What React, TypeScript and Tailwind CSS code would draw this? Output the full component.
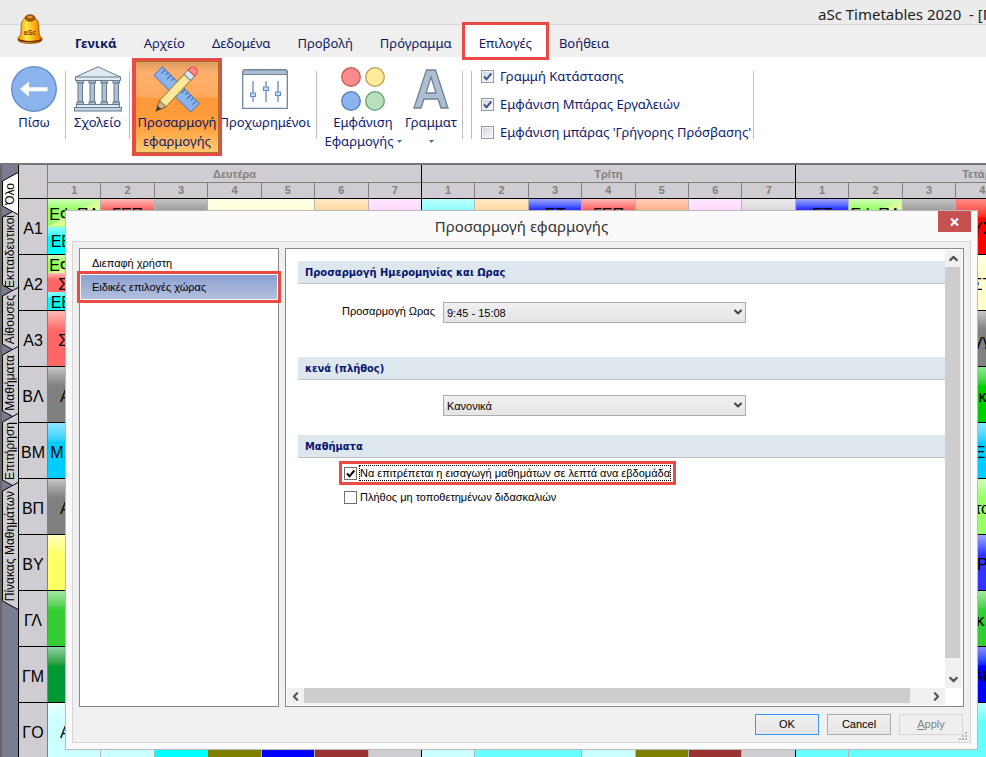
import React from 'react';
import { ChevronDown, ChevronLeft, ChevronRight, ChevronUp } from 'lucide-react';

type Cell = {
  color: string;
  text?: string;
  span?: number;
  parts?: { color: string; text?: string; accent?: string }[];
};

type Row = { label: string; cells: Cell[] };

const menuItems = ['Γενικά', 'Αρχείο', 'Δεδομένα', 'Προβολή', 'Πρόγραμμα', 'Επιλογές', 'Βοήθεια'];

const toolbarOptions = [
  { label: 'Γραμμή Κατάστασης', checked: true },
  { label: 'Εμφάνιση Μπάρας Εργαλειών', checked: true },
  { label: "Εμφάνιση μπάρας 'Γρήγορης Πρόσβασης'", checked: false },
];

const sideTabs = [
  { label: 'Όλο', height: 43 },
  { label: 'Εκπαιδευτικοί', height: 86 },
  { label: 'Αίθουσες', height: 66 },
  { label: 'Μαθήματα', height: 74 },
  { label: 'Επιτήρηση', height: 76 },
  { label: 'Πίνακας Μαθημάτων', height: 128 },
];

const days = ['Δευτέρα', 'Τρίτη', 'Τετάρτη'];
const periods = [1, 2, 3, 4, 5, 6, 7];

const lime = { color: '#99ff66', text: 'ΕΦ ΠΛ', accent: '#d9ff99' };
const aqua = { color: '#00ffff', text: 'ΕΕ ΕΕ' };
const empty = { color: '#00ffff' };
const rose = { color: '#ff6666', text: 'ΓΕΠ' };
const navy = { color: '#3333ff', text: 'ΕΤ' };
const filler: Cell = { color: '#cfcdd2', span: 16 };

const rows: Row[] = [
  {
    label: 'Α1',
    cells: [
      { color: '', parts: [lime, aqua] },
      { color: '', parts: [rose, empty] },
      { color: '#808080' },
      { color: '#ffffcc', span: 2 },
      { color: '#ffcc80' },
      { color: '#ffccff' },
      { color: '#66ffff' },
      { color: '#ffcc80' },
      { color: '', parts: [navy, empty] },
      { color: '', parts: [rose, empty] },
      { color: '#ff9966' },
      { color: '#ffccff' },
      { color: '#cfcdd2' },
      { color: '', parts: [navy, empty] },
      { color: '', parts: [lime, empty] },
      { color: '#808080' },
      { color: '#ff0000', text: 'ΥΣ' },
    ],
  },
  {
    label: 'Α2',
    cells: [
      { color: '', parts: [lime, { color: '#ff6666', text: 'ΣΕΠ' }, aqua] },
      filler,
      { color: '#ffffcc', text: 'ΣΤ' },
    ],
  },
  { label: 'Α3', cells: [{ color: '#ff6666', text: 'ΣΕΠ' }, filler, { color: '#808080', text: 'γγ' }] },
  { label: 'ΒΛ', cells: [{ color: '#808080', text: 'ΑΓΓ' }, filler, { color: '#00cc00', text: 'κ' }] },
  { label: 'ΒΜ', cells: [{ color: '#00ccff', text: 'Μ. ΕΕ.' }, filler, { color: '#00ccff', text: 'Ε.' }] },
  { label: 'ΒΠ', cells: [{ color: '#808080', text: 'ΑΓΓ' }, filler, { color: '#99ff66', text: 'το' }] },
  { label: 'ΒΥ', cells: [{ color: '#ffff66' }, filler, { color: '#3333ff', text: 'Ρ' }] },
  { label: 'ΓΛ', cells: [{ color: '#33cc33' }, filler, { color: '#33cc33', text: 'κ.' }] },
  { label: 'ΓΜ', cells: [{ color: '#009933' }, filler, { color: '#0000ff', text: 'Αθ' }] },
  {
    label: 'ΓΟ',
    cells: [
      { color: '#ccffff', text: 'ΑΓΓ' },
      { color: '#ccffff' },
      { color: '#00ffff' },
      { color: '#808000' },
      { color: '#0000ff' },
      { color: '#993333' },
      { color: '#cfcdd2' },
      { color: '#ccffff' },
      { color: '#66ffff', span: 2 },
      { color: '#ccffff' },
      { color: '#808000' },
      { color: '#993333' },
      { color: '#cfcdd2' },
      { color: '#66ffff' },
      { color: '#66ffff', span: 3 },
    ],
  },
];

const shade = (color: string) =>
  `linear-gradient(to bottom, color-mix(in srgb, ${color} 45%, white), ${color} 35%)`;

const BellIcon: React.FC = () => (
  <svg viewBox="0 0 26 30" className="h-[30px] w-[26px]">
    <defs>
      <linearGradient id="bell" x1="0" x2="1" y1="0" y2="0">
        <stop offset="0" stopColor="#f08a00" />
        <stop offset="0.35" stopColor="#ffe94a" />
        <stop offset="0.65" stopColor="#fdb515" />
        <stop offset="1" stopColor="#d96500" />
      </linearGradient>
    </defs>
    <path
      d="M13 3C7 3 4.500 6 4.200 12L3.800 20C3.500 22 1 23 .8 25C1 28.500 7 29.500 13 29.500S25 28.500 25.200 25C25 23 22.500 22 22.200 20L21.800 12C21.500 6 19 3 13 3Z"
      fill="url(#bell)"
      stroke="#9a5200"
      strokeWidth="0.8"
    />
    <path d="M1.500 25.500C6 28.500 20 28.500 24.500 25.500" fill="none" stroke="#7b2a00" strokeWidth="1.600" />
    <ellipse cx="13" cy="4" rx="5" ry="3.200" fill="#a85a06" stroke="#6d3500" strokeWidth="0.8" />
    <ellipse cx="13" cy="3" rx="2.500" ry="1.300" fill="#e39a2c" />
    <text x="13" y="21" fontSize="7" fontWeight="700" textAnchor="middle" fill="#8a3a10" fontFamily="Liberation Sans, sans-serif">
      aSc
    </text>
  </svg>
);

const BackIcon: React.FC = () => (
  <svg viewBox="0 0 46 46" className="mb-px h-[46px] w-[46px]">
    <circle cx="23" cy="23" r="22.300" fill="#8bb4ee" stroke="#6089c8" strokeWidth="1.300" />
    <path d="M9 23L18 15.500V21.200H36.500V25.200H18V30.700Z" fill="#fff" />
  </svg>
);

const SchoolIcon: React.FC = () => (
  <svg viewBox="0 0 48 46" className="mb-px h-[46px] w-12" stroke="#667b8f" strokeWidth="1">
    <path d="M1.500 11L24 .8L46.500 11V14.500H1.500Z" fill="#dfeaf3" />
    <path d="M1.500 11H46.500" fill="none" />
    {[3, 15, 27, 39].map((x) => (
      <g key={x} fill="#aebfd1">
        <rect x={x} y="14.500" width="6.500" height="2.500" />
        <rect x={x + 1} y="17" width="4.500" height="19" />
        <rect x={x} y="36" width="6.500" height="3" />
      </g>
    ))}
    <rect x="2.500" y="38.500" width="43" height="3" fill="#dfeaf3" />
    <rect x=".5" y="41.500" width="47" height="3.500" fill="#c4d3e0" />
  </svg>
);

const CustomizeIcon: React.FC = () => (
  <svg viewBox="0 0 46 46" className="mb-px h-[46px] w-[46px]">
    <g transform="rotate(45 23 23)">
      <rect x="-3" y="17.500" width="52" height="12" fill="#8bb4ee" stroke="#5a83c2" />
      {[1, 5, 9, 13, 29, 33, 37, 41, 45].map((x, i) => (
        <path key={x} d={`M${x} 17.500V${i % 2 ? 21 : 23}`} stroke="#47699f" strokeWidth="1.100" />
      ))}
    </g>
    <g transform="translate(2 45) rotate(-47)">
      <path d="M0 0L10 -4.500V4.500Z" fill="#d9b384" stroke="#6f5b39" />
      <path d="M0 0L5 -2.300V2.300Z" fill="#3b3b3b" />
      <rect x="10" y="-4.500" width="36" height="9" fill="#fbe89b" stroke="#9b8541" />
      <rect x="46" y="-4.500" width="6" height="9" fill="#d9e8f4" stroke="#6f8799" />
      <path d="M52 -4.500H54A4.500 4.500 0 0 1 54 4.500H52Z" fill="#ff8787" stroke="#c84e4e" />
    </g>
  </svg>
);

const SlidersIcon: React.FC = () => (
  <svg viewBox="0 0 46 40" className="mt-[3px] mb-1 h-10 w-[46px]">
    <path d="M.7 39.300V3Q.7 .7 3 .7H43Q45.300 .7 45.300 3V39.300Z" fill="#fff" stroke="#71869a" strokeWidth="1.300" />
    <path d="M1 5.500V3Q1 1 3 1H43Q45 1 45 3V5.500Z" fill="#adbdd1" stroke="#71869a" />
    {[
      [11, 24],
      [24, 18],
      [36, 23],
    ].map(([x, y]) => (
      <g key={x}>
        <path d={`M${x} 12V33`} stroke="#6089c8" strokeWidth="1.300" />
        <rect x={x - 2.5} y={y} width="5" height="3.500" fill="#c3dcf7" stroke="#6089c8" />
      </g>
    ))}
  </svg>
);

const ColorsIcon: React.FC = () => (
  <svg viewBox="0 0 46 46" className="mb-px h-[46px] w-[46px]" strokeWidth="1.300">
    <circle cx="11" cy="11" r="9.300" fill="#fa8b8b" stroke="#ca5555" />
    <circle cx="35" cy="11" r="9.300" fill="#ffeb9c" stroke="#b9a052" />
    <circle cx="11" cy="35" r="9.300" fill="#8bb4ee" stroke="#527fbd" />
    <circle cx="35" cy="35" r="9.300" fill="#b9e0bb" stroke="#62a575" />
  </svg>
);

const LetterIcon: React.FC = () => (
  <svg viewBox="0 0 36 46" className="mb-px h-[46px] w-9">
    <path
      d="M13.500 4H22.500L35 42H28L25 33H11L8 42H1ZM18 11L13 27H23Z"
      fill="#adbed2"
      fillRule="evenodd"
      stroke="#6f8294"
      strokeWidth="1.300"
    />
  </svg>
);

const Separator: React.FC = () => <span className="mt-[10px] h-[68px] w-px shrink-0 bg-[#bcbcbc]" />;

const Caret: React.FC = () => (
  <svg viewBox="0 0 5 3" className="h-[3px] w-[5px]">
    <path d="M0 0H5L2.500 3Z" fill="#4472b0" />
  </svg>
);

const CheckBox: React.FC<{ id: string; checked: boolean; ribbon?: boolean }> = ({ id, checked, ribbon }) => (
  <span className="relative block size-[13px] shrink-0">
    <input
      id={id}
      type="checkbox"
      defaultChecked={checked}
      className={`peer block size-[13px] appearance-none border ${
        ribbon
          ? 'border-[#8d9cad] bg-linear-to-br from-[#c9d2de] to-white shadow-[inset_0_0_0_1px_#f4f4f4]'
          : 'border-[#707070] bg-white'
      }`}
    />
    <svg viewBox="0 0 13 13" className="pointer-events-none absolute inset-0 hidden size-[13px] peer-checked:block">
      <path d="M3 6.500L5.500 9.300L10.300 3.500" fill="none" stroke={ribbon ? '#3c588f' : '#000'} strokeWidth="2" />
    </svg>
  </span>
);

const MenuBar: React.FC = () => (
  <nav className="flex h-8 bg-[#efefef] pl-[62px] text-[#0b1a63]">
    {menuItems.map((item, i) => (
      <button
        key={item}
        className={`-ml-px px-[14px] pt-1 ${i === 0 ? 'font-bold' : ''} ${
          item === 'Επιλογές' ? 'relative z-10 bg-white outline-3 outline-[#e94b43]' : ''
        }`}
      >
        {item}
      </button>
    ))}
  </nav>
);

const Ribbon: React.FC = () => (
  <div className="flex h-[106px] bg-white pt-1 text-[#0b1a6e]">
    <button className="flex w-[65px] flex-col items-center pt-[5px] pl-[3px]">
      <BackIcon />
      <span>Πίσω</span>
    </button>
    <Separator />
    <button className="flex w-[63px] flex-col items-center pt-[5px]">
      <SchoolIcon />
      <span>Σχολείο</span>
    </button>
    <Separator />
    <button className="relative z-10 ml-[5px] flex h-[92px] w-[84px] flex-col items-center border border-[#a8722f] bg-[linear-gradient(to_bottom,#dd9a60,#ffb06c_12%,#ffa85e_39%,#ff9838_40%,#ff9e3c_70%,#ffc970)] pt-1 outline-3 outline-[#e94b43]">
      <CustomizeIcon />
      <span>Προσαρμογή</span>
      <span>εφαρμογής</span>
    </button>
    <button className="mr-[5px] flex w-[92px] flex-col items-center pt-[5px]">
      <SlidersIcon />
      <span>Προχωρημένοι</span>
    </button>
    <Separator />
    <button className="flex w-[92px] flex-col items-center pt-[5px]">
      <ColorsIcon />
      <span>Εμφάνιση</span>
      <span className="flex items-center gap-[3px]">
        Εφαρμογής
        <Caret />
      </span>
    </button>
    <button className="mr-[9px] flex w-11 flex-col items-center pt-[5px]">
      <LetterIcon />
      <span>Γραμματ</span>
      <span className="flex h-[19px] items-center">
        <Caret />
      </span>
    </button>
    <Separator />
    <span className="w-2 shrink-0" />
    <Separator />
    <div className="flex flex-col gap-[9px] pt-[6px] pr-[2px] pl-[9px]">
      {toolbarOptions.map((option, i) => (
        <div key={option.label} className="flex items-center gap-[6px] whitespace-nowrap">
          <CheckBox id={`toolbar-${i}`} checked={option.checked} ribbon />
          <label htmlFor={`toolbar-${i}`}>{option.label}</label>
        </div>
      ))}
    </div>
    <Separator />
  </div>
);

const SideTabs: React.FC = () => (
  <div className="flex w-[19px] shrink-0 flex-col border-r border-l-2 border-r-black border-l-[#666] bg-[#7b7b91] pt-[7px]">
    {sideTabs.map((tab, i) => (
      <button
        key={tab.label}
        className={`relative flex shrink-0 items-center justify-center ${i === 0 ? 'z-10' : '-mt-[7px]'}`}
        style={{ height: tab.height }}
      >
        <svg viewBox={`0 0 16 ${tab.height}`} className="absolute inset-0 h-full w-4">
          <path
            d={`M16 .5L.5 9V${tab.height - 9}L16 ${tab.height - 0.5}`}
            fill={i === 0 ? '#fff' : '#cfcdd2'}
            stroke="#000"
          />
        </svg>
        <span className="relative rotate-180 text-[12px] leading-4 whitespace-nowrap text-black [writing-mode:vertical-rl]">
          {tab.label}
        </span>
      </button>
    ))}
  </div>
);

const Timetable: React.FC = () => (
  <table className="w-[1151px] shrink-0 table-fixed border-separate border-spacing-0 bg-[#cfcdd2] text-center">
    <colgroup>
      <col className="w-[29px]" />
      {days.map((day) => periods.map((p) => <col key={day + p} />))}
    </colgroup>
    <thead className="text-[11px] leading-4 font-bold text-[#808080]">
      <tr>
        <th rowSpan={2} className="border-r border-b border-r-[#808080] border-b-black" />
        {days.map((day) => (
          <th key={day} colSpan={7} className="h-[18px] border-r border-b border-r-black border-b-[#808080] p-0">
            {day}
          </th>
        ))}
      </tr>
      <tr>
        {days.map((day) =>
          periods.map((p) => (
            <th
              key={day + p}
              className={`h-4 border-r border-b border-b-black p-0 leading-[15px] ${p === 7 ? 'border-r-black' : 'border-r-[#808080]'}`}
            >
              {p}
            </th>
          ))
        )}
      </tr>
    </thead>
    <tbody className="text-[16px] text-black">
      {rows.map((row) => (
        <tr key={row.label}>
          <th className="h-14 border-r border-b border-r-[#808080] border-b-black p-0 pt-[3px] font-normal">
            {row.label}
          </th>
          {row.cells.map((cell, i) => (
            <td
              key={i}
              colSpan={cell.span ?? 1}
              className={`h-14 overflow-hidden border-r border-b border-b-black p-0 whitespace-nowrap ${
                cell.parts ? '' : 'pt-[3px]'
              } ${
                i === (rows[0] === row ? 5 : 6) || (row.label === 'ΓΟ' && i === 12)
                  ? 'border-r-black'
                  : 'border-r-[#b4b4b4]'
              }`}
              style={cell.parts ? undefined : { background: shade(cell.color) }}
            >
              {cell.parts ? (
                <div className="flex h-[55px] flex-col">
                  {cell.parts.map((part, j) => (
                    <div
                      key={j}
                      className="relative flex flex-1 items-center justify-center overflow-hidden pt-1"
                      style={{ background: shade(part.color) }}
                    >
                      {part.accent && (
                        <svg viewBox="0 0 10 10" preserveAspectRatio="none" className="absolute inset-0 h-full w-full">
                          <path d="M0 10L10 0V10Z" fill={part.accent} />
                        </svg>
                      )}
                      <span className="relative leading-[18px]">{part.text}</span>
                    </div>
                  ))}
                </div>
              ) : (
                cell.text
              )}
            </td>
          ))}
        </tr>
      ))}
    </tbody>
  </table>
);

const SectionTitle: React.FC<{ id: string; children: React.ReactNode }> = ({ id, children }) => (
  <h3
    id={id}
    className="h-[23px] border-b border-[#b9c0c6] bg-[#dde7ed] pl-[7px] font-['DejaVu_Sans_Condensed','DejaVu_Sans',sans-serif] leading-[23px] font-bold text-[#07156f]"
  >
    {children}
  </h3>
);

const SelectBox: React.FC<{ id: string; value: string; labelledBy?: string }> = ({ id, value, labelledBy }) => (
  <span className="relative block w-[303px]">
    <select
      id={id}
      aria-labelledby={labelledBy}
      className="block h-[21px] w-full appearance-none border border-[#acacac] bg-linear-to-b from-[#f0f0f0] to-[#e5e5e5] pl-[3px] leading-4 text-black"
    >
      <option>{value}</option>
    </select>
    <ChevronDown className="pointer-events-none absolute top-1 right-[2px] size-3" strokeWidth={4} color="#444" />
  </span>
);

const SettingsPane: React.FC = () => (
  <div className="grid min-w-0 flex-1 grid-cols-[1fr_17px] grid-rows-[1fr_17px] border border-[#828790] bg-white p-px">
    <div className="min-w-0 pt-[11px] pl-[11px]">
      <SectionTitle id="date-time">Προσαρμογή Ημερομηνίας και Ωρας</SectionTitle>
      <div className="flex pt-[18px] pb-[34px]">
        <label htmlFor="time" className="w-[137px] text-right leading-[18px]">
          Προσαρμογή Ωρας
        </label>
        <span className="w-2" />
        <SelectBox id="time" value="9:45 - 15:08" />
      </div>
      <SectionTitle id="gaps">κενά (πλήθος)</SectionTitle>
      <div className="pt-[15px] pb-[19px] pl-[145px]">
        <SelectBox id="gap-count" value="Κανονικά" labelledBy="gaps" />
      </div>
      <SectionTitle id="lessons">Μαθήματα</SectionTitle>
      <div className="flex flex-col items-start gap-2 pt-[6px] pl-11">
        <div className="flex items-center gap-[2px] px-[2px] outline-3 outline-[#e94b43]">
          <CheckBox id="minutes" checked />
          <label htmlFor="minutes" className="my-px border border-dotted border-black leading-[14px] whitespace-nowrap">
            Να επιτρέπεται η εισαγωγή μαθημάτων σε λεπτά ανα εβδομάδα
          </label>
        </div>
        <div className="flex items-center gap-[3px] pl-[2px]">
          <CheckBox id="unplaced" checked={false} />
          <label htmlFor="unplaced" className="leading-[14px] whitespace-nowrap">
            Πλήθος μη τοποθετημένων διδασκαλιών
          </label>
        </div>
      </div>
    </div>
    <div className="flex flex-col bg-[#f0f0f0]">
      <ChevronUp className="mx-[2px] my-[2px] size-[13px]" strokeWidth={4} color="#555" />
      <div className="w-[15px] flex-1 bg-[#cdcdcd]" />
      <ChevronDown className="mx-[2px] mt-[15px] mb-[2px] size-[13px]" strokeWidth={4} color="#555" />
    </div>
    <div className="flex items-center bg-[#f0f0f0]">
      <ChevronLeft className="mx-[2px] size-[13px]" strokeWidth={4} color="#555" />
      <div className="h-[15px] flex-1 self-start bg-[#cdcdcd]" />
      <ChevronRight className="mr-[2px] ml-5 size-[13px]" strokeWidth={4} color="#555" />
    </div>
  </div>
);

const Dialog: React.FC = () => (
  <div
    role="dialog"
    aria-labelledby="dialog-title"
    className="absolute top-[210px] right-2 bottom-[7px] left-[65px] z-20 flex flex-col border border-[#b9b9b9] bg-[#fafafa] px-[6px] pb-[6px] font-['Liberation_Sans',sans-serif] text-[11px] text-black"
  >
    <div className="relative flex h-[30px] justify-center">
      <h2 id="dialog-title" className="font-['Noto_Sans',sans-serif] text-[15px] leading-[30px] text-[#333]">
        Προσαρμογή εφαρμογής
      </h2>
      <button aria-label="Close" className="absolute top-0 right-0 flex h-[21px] w-[33px] items-center justify-center bg-[#c75050]">
        <svg viewBox="0 0 9 8" className="h-2 w-[9px]">
          <path d="M1 .5L8 7.500M8 .5L1 7.500" stroke="#fff" strokeWidth="2.200" />
        </svg>
      </button>
    </div>
    <div className="relative flex min-h-0 flex-1 flex-col border border-[#d5d5d5] bg-[#f0f0f0] px-[6px] pt-[6px] pb-[7px]">
      <div className="flex min-h-0 flex-1 gap-[6px]">
        <div className="flex w-[200px] shrink-0 flex-col border border-[#828790] bg-white pt-[2px]">
          <button className="h-[23px] pl-3 text-left leading-6">Διεπαφή χρήστη</button>
          <button className="h-[26px] border border-white bg-linear-to-b from-[#8c9fd1] to-[#b3c1dc] pl-[11px] text-left outline-3 outline-[#e94b43]">
            Ειδικές επιλογές χώρας
          </button>
        </div>
        <SettingsPane />
      </div>
      <div className="flex justify-end gap-2 pt-[7px] pr-px">
        <button className="h-[21px] w-16 border border-[#3399ff] bg-linear-to-b from-[#f0f0f0] to-[#e5e5e5]">OK</button>
        <button className="h-[21px] w-16 border border-[#acacac] bg-linear-to-b from-[#f0f0f0] to-[#e5e5e5]">Cancel</button>
        <button disabled className="h-[21px] w-16 border border-[#d5d5d5] bg-[#efefef] text-[#838383]">
          <u>A</u>pply
        </button>
      </div>
      <svg viewBox="0 0 8 8" className="absolute right-[3px] bottom-[2px] size-2" fill="#b8b8b8">
        <path d="M6 0H8V2H6ZM3 3H5V5H3ZM6 3H8V5H6ZM0 6H2V8H0ZM3 6H5V8H3ZM6 6H8V8H6Z" />
      </svg>
    </div>
  </div>
);

const App: React.FC = () => {
  return (
    <div className="relative flex h-screen flex-col overflow-hidden bg-white font-['Noto_Sans',sans-serif] text-[13px] leading-[19px]">
      <header className="relative shrink-0">
        <div className="flex h-[25px] justify-end border-b border-[#d8d8d8] bg-[#ebebeb]">
          <h1 className="w-[168px] overflow-hidden text-[15px] leading-7 whitespace-pre text-[#222]">
            {'aSc Timetables 2020  - [Προβολή'}
          </h1>
        </div>
        <div className="absolute top-[14px] left-[17px]">
          <BellIcon />
        </div>
        <MenuBar />
        <Ribbon />
      </header>
      <main className="flex min-h-0 flex-1 overflow-hidden border-t-2 border-[#777] font-['Liberation_Sans',sans-serif]">
        <SideTabs />
        <Timetable />
      </main>
      <Dialog />
    </div>
  );
};

export default App;
